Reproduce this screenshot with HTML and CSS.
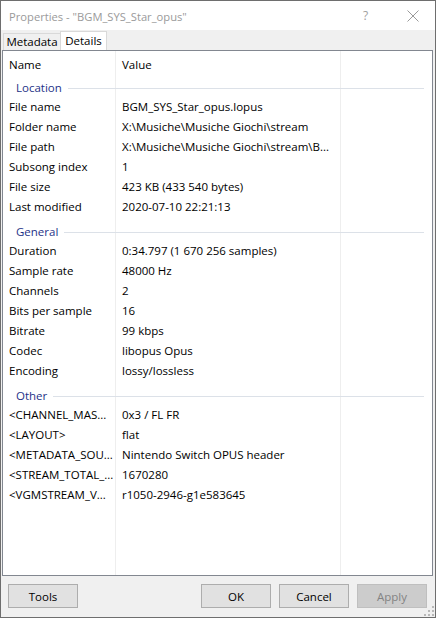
FILE: index.html
```html
<!DOCTYPE html>
<html>
<head>
<meta charset="utf-8">
<link rel="stylesheet" href="styles.css">
</head>
<body>
<div class="window">
  <div class="titlebar">
    <span class="title">Properties - "BGM_SYS_Star_opus"</span>
    <span class="help">?</span>
    <span class="close"><svg width="12" height="12" viewBox="0 0 12 12"><path d="M0.5 0.5 L11.5 11.5 M11.5 0.5 L0.5 11.5" stroke="#9a9a9a" stroke-width="1" fill="none"/></svg></span>
  </div>
  <div class="tabs">
    <div class="tab">Metadata</div>
    <div class="tab active">Details</div>
  </div>
  <div class="list">
    <div class="header"><div class="cell">Name</div><div class="cell">Value</div></div>

    <div class="group"><span class="glabel">Location</span><span class="gline"></span></div>
    <div class="row"><div class="cell">File name</div><div class="cell">BGM_SYS_Star_opus.lopus</div></div>
    <div class="row"><div class="cell">Folder name</div><div class="cell">X:\Musiche\Musiche Giochi\stream</div></div>
    <div class="row"><div class="cell">File path</div><div class="cell">X:\Musiche\Musiche Giochi\stream\B...</div></div>
    <div class="row"><div class="cell">Subsong index</div><div class="cell">1</div></div>
    <div class="row"><div class="cell">File size</div><div class="cell">423 KB (433 540 bytes)</div></div>
    <div class="row"><div class="cell">Last modified</div><div class="cell">2020-07-10 22:21:13</div></div>

    <div class="group"><span class="glabel">General</span><span class="gline"></span></div>
    <div class="row"><div class="cell">Duration</div><div class="cell">0:34.797 (1 670 256 samples)</div></div>
    <div class="row"><div class="cell">Sample rate</div><div class="cell">48000 Hz</div></div>
    <div class="row"><div class="cell">Channels</div><div class="cell">2</div></div>
    <div class="row"><div class="cell">Bits per sample</div><div class="cell">16</div></div>
    <div class="row"><div class="cell">Bitrate</div><div class="cell">99 kbps</div></div>
    <div class="row"><div class="cell">Codec</div><div class="cell">libopus Opus</div></div>
    <div class="row"><div class="cell">Encoding</div><div class="cell">lossy/lossless</div></div>

    <div class="group"><span class="glabel">Other</span><span class="gline"></span></div>
    <div class="row"><div class="cell">&lt;CHANNEL_MAS...</div><div class="cell">0x3 / FL FR</div></div>
    <div class="row"><div class="cell">&lt;LAYOUT&gt;</div><div class="cell">flat</div></div>
    <div class="row"><div class="cell">&lt;METADATA_SOU...</div><div class="cell">Nintendo Switch OPUS header</div></div>
    <div class="row"><div class="cell">&lt;STREAM_TOTAL_...</div><div class="cell">1670280</div></div>
    <div class="row"><div class="cell">&lt;VGMSTREAM_V...</div><div class="cell">r1050-2946-g1e583645</div></div>
  </div>
  <div class="footer">
    <button class="btn">Tools</button>
    <div class="spacer"></div>
    <button class="btn">OK</button>
    <button class="btn">Cancel</button>
    <button class="btn disabled">Apply</button>
    <svg class="grip" width="10" height="10" viewBox="0 0 10 10">
      <rect x="8" y="0" width="2" height="2" fill="#b8b8b8"/>
      <rect x="8" y="4" width="2" height="2" fill="#b8b8b8"/>
      <rect x="4" y="4" width="2" height="2" fill="#b8b8b8"/>
      <rect x="8" y="8" width="2" height="2" fill="#b8b8b8"/>
      <rect x="4" y="8" width="2" height="2" fill="#b8b8b8"/>
      <rect x="0" y="8" width="2" height="2" fill="#b8b8b8"/>
    </svg>
  </div>
</div>
</body>
</html>
```

FILE: styles.css
```css
html, body {
  margin: 0;
  padding: 0;
  background: #f0f0f0;
}
body {
  font-family: "Open Sans", "Noto Sans", sans-serif;
  font-size: 11.5px;
  color: #000;
}
.window {
  box-sizing: border-box;
  width: 436px;
  height: 618px;
  border: 1px solid #6e6e6e;
  background: #f0f0f0;
  display: flex;
  flex-direction: column;
}
.titlebar {
  height: 29px;
  background: #fff;
  display: flex;
  align-items: center;
  padding-left: 8px;
  color: #9a9a9a;
}
.title {
  flex: 1;
  font-size: 11.2px;
  padding-top: 1px;
}
.help {
  width: 14px;
  margin-right: 30px;
  font-size: 12px;
  color: #a0a0a0;
}
.close {
  width: 12px;
  margin-right: 16px;
  display: flex;
}
.tabs {
  height: 20px;
  display: flex;
  align-items: flex-end;
  padding-left: 2px;
}
.tab {
  box-sizing: border-box;
  height: 17px;
  width: 57px;
  border: 1px solid #d9d9d9;
  border-bottom: none;
  border-right: none;
  text-align: center;
  white-space: nowrap;
  line-height: 16px;
  background: #f0f0f0;
}
.tab.active {
  height: 19px;
  width: 47px;
  border-right: 1px solid #d9d9d9;
  background: #fff;
  line-height: 17px;
}
.list {
  box-sizing: border-box;
  height: 526px;
  margin: 0 2px 0 1px;
  border: 1px solid #828790;
  background-color: #fff;
  background-image:
    linear-gradient(to right, transparent 112px, #eeeeee 112px, #eeeeee 113px, transparent 113px),
    linear-gradient(to right, transparent 337px, #eeeeee 337px, #eeeeee 338px, transparent 338px);
}
.header, .row {
  display: grid;
  grid-template-columns: 113px 224px 1fr;
}
.header {
  height: 22px;
  padding-top: 6px;
  box-sizing: border-box;
  line-height: 16px;
}
.row {
  height: 20px;
  line-height: 20px;
}
.cell {
  padding-left: 6px;
  white-space: nowrap;
  overflow: hidden;
}
.group {
  height: 24px;
  box-sizing: border-box;
  padding-top: 6px;
  padding-left: 13px;
  padding-right: 8px;
  display: flex;
  align-items: center;
  line-height: 16px;
}
.glabel {
  color: #1e3287;
  height: 16px;
}
.gline {
  flex: 1;
  height: 1px;
  margin-left: 6px;
  background: #dce1e8;
}
.footer {
  flex: 1;
  display: flex;
  align-items: flex-start;
  padding: 8px 8px 0 7px;
  gap: 8px;
  position: relative;
}
.spacer {
  flex: 1;
}
.btn {
  box-sizing: border-box;
  width: 70px;
  height: 24px;
  border: 1px solid #adadad;
  background: #e1e1e1;
  font-family: "Open Sans", "Noto Sans", sans-serif;
  font-size: 11.5px;
  color: #000;
  padding: 0;
  margin: 0;
}
.btn.disabled {
  background: #cccccc;
  border-color: #bfbfbf;
  color: #838383;
}
.grip {
  position: absolute;
  right: 1px;
  bottom: 1px;
}
```
